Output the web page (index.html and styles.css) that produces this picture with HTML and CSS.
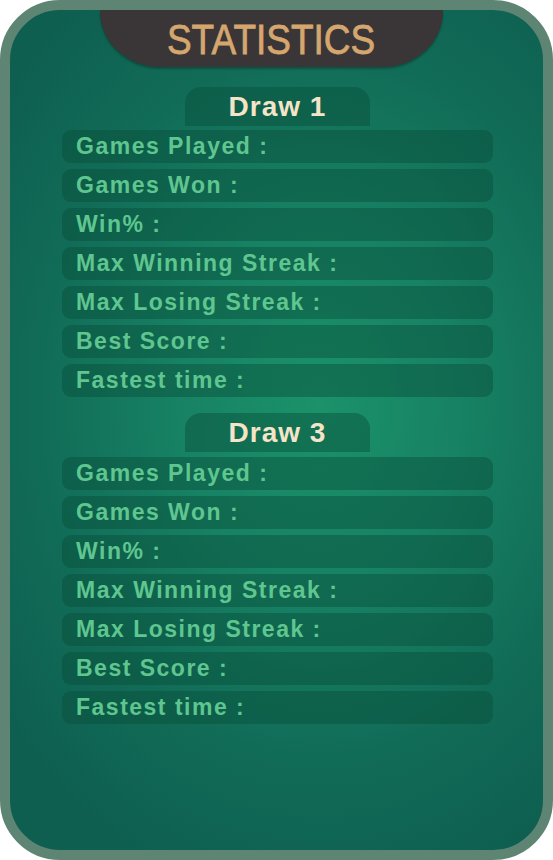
FILE: index.html
```html
<!DOCTYPE html>
<html>
<head>
<meta charset="utf-8">
<link rel="stylesheet" href="styles.css">
</head>
<body>
<div class="frame">
  <div class="header"><span class="title">STATISTICS</span></div>

  <section class="section first">
    <div class="tab">Draw 1</div>
    <div class="rows">
      <div class="row">Games Played :</div>
      <div class="row">Games Won :</div>
      <div class="row">Win% :</div>
      <div class="row">Max Winning Streak :</div>
      <div class="row">Max Losing Streak :</div>
      <div class="row">Best Score :</div>
      <div class="row">Fastest time :</div>
    </div>
  </section>

  <section class="section second">
    <div class="tab">Draw 3</div>
    <div class="rows">
      <div class="row">Games Played :</div>
      <div class="row">Games Won :</div>
      <div class="row">Win% :</div>
      <div class="row">Max Winning Streak :</div>
      <div class="row">Max Losing Streak :</div>
      <div class="row">Best Score :</div>
      <div class="row">Fastest time :</div>
    </div>
  </section>
</div>
</body>
</html>
```

FILE: styles.css
```css
html, body {
  margin: 0;
  padding: 0;
  background: #ffffff;
}

.frame {
  box-sizing: border-box;
  width: 553px;
  height: 860px;
  border: 10px solid #5e8574;
  border-radius: 60px;
  overflow: hidden;
  background:
    radial-gradient(ellipse 75% 60% at 58% 47%, #1b9269 0%, #178264 35%, #116c57 70%, #0e5f50 100%);
  font-family: "Liberation Sans", Arial, sans-serif;
}

.header {
  width: 343px;
  height: 57px;
  margin-left: 90px;
  background: #3a3536;
  border-radius: 0 0 60px 60px / 0 0 56px 56px;
  box-shadow: 0 2px 2px rgba(0, 0, 0, 0.25);
  display: flex;
  justify-content: center;
  align-items: center;
}

.title {
  display: inline-block;
  color: #d5a66e;
  font-size: 43px;
  line-height: 1;
  -webkit-text-stroke: 0.8px #d5a66e;
  transform: scaleX(0.86);
  margin-top: 1px;
}

.section.first {
  margin-top: 20px;
}

.section.second {
  margin-top: 16px;
}

.tab {
  box-sizing: border-box;
  width: 185px;
  height: 39px;
  margin-left: 175px;
  background: rgba(8, 78, 58, 0.45);
  border-radius: 16px 16px 0 0;
  color: #f5e4c8;
  font-size: 28px;
  font-weight: 700;
  letter-spacing: 1px;
  display: flex;
  justify-content: center;
  align-items: center;
  padding-top: 1px;
}

.rows {
  display: flex;
  flex-direction: column;
  gap: 6px;
  margin-top: 4px;
}

.second .rows {
  margin-top: 5px;
}

.row {
  box-sizing: border-box;
  width: 431px;
  height: 33px;
  margin-left: 52px;
  padding-left: 14px;
  border-radius: 9px;
  background: rgba(8, 78, 58, 0.45);
  color: #5fc690;
  font-size: 23px;
  font-weight: 700;
  letter-spacing: 1.5px;
  display: flex;
  align-items: center;
  padding-bottom: 0;
}
```
